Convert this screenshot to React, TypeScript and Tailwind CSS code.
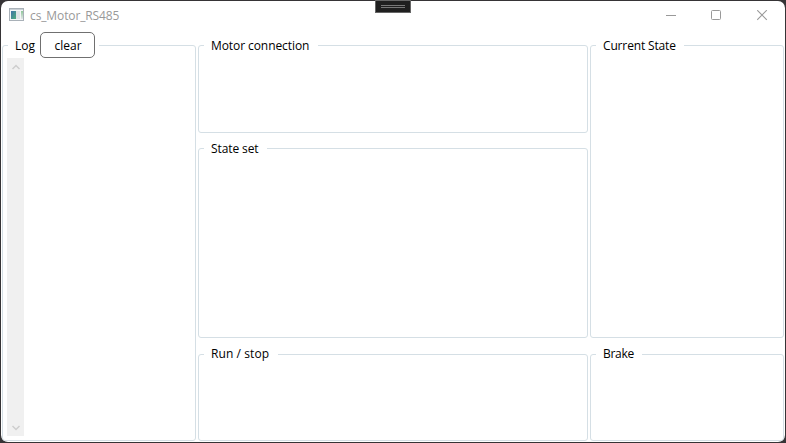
import type { ReactNode } from "react";

type GroupBoxProps = {
  legend: ReactNode;
  legendClass: string;
  className: string;
  children?: ReactNode;
};

function GroupBox({ legend, legendClass, className, children }: GroupBoxProps) {
  return (
    <section className={`rounded-[3px] border border-[#d5dfe5] ${className}`}>
      <div className={`-mt-[11px] mb-px ml-[5px] flex h-5 bg-white pl-[7px] whitespace-nowrap ${legendClass}`}>
        {legend}
      </div>
      {children}
    </section>
  );
}

function AppIcon() {
  return (
    <svg className="-mt-[2px]" width="16" height="14" viewBox="0 0 16 14" shapeRendering="crispEdges">
      <defs>
        <linearGradient id="screen" x1="0" y1="0" x2="1" y2="1">
          <stop offset="0" stopColor="#3f72a8" />
          <stop offset="1" stopColor="#4fae7c" />
        </linearGradient>
        <linearGradient id="panel" x1="0" y1="0" x2="0" y2="1">
          <stop offset="0" stopColor="#8fc79a" />
          <stop offset="1" stopColor="#e3e6e8" />
        </linearGradient>
      </defs>
      <rect x="0.5" y="0.5" width="14" height="12" fill="#f4f6f7" stroke="#a9b1b8" />
      <rect x="1" y="1" width="13" height="1" fill="#c9d0d5" />
      <rect x="2" y="3" width="5" height="8" fill="url(#screen)" />
      <rect x="7" y="3" width="4" height="8" fill="#dfe3e6" />
      <rect x="12" y="3" width="2" height="8" fill="url(#panel)" />
    </svg>
  );
}

function TitleBar() {
  return (
    <header className="flex h-[29px] items-center pl-2">
      <AppIcon />
      <h1 className="ml-[5px] w-24 pt-px text-[12px] leading-4 tracking-[-0.12px] whitespace-nowrap text-[#999999]">cs_Motor_RS485</h1>
      <div className="ml-auto flex text-[#999999]">
        <button aria-label="Minimize" className="flex w-[45px] justify-center">
          <svg width="11" height="11" shapeRendering="crispEdges"><path d="M0 5.5h10" stroke="currentColor" /></svg>
        </button>
        <button aria-label="Maximize" className="flex w-[45px] justify-center">
          <svg width="11" height="11" fill="none"><rect x="0.5" y="0.5" width="9" height="9" rx="1" stroke="currentColor" /></svg>
        </button>
        <button aria-label="Close" className="flex w-[46px] pl-[18px]">
          <svg width="11" height="11" fill="none"><path d="M.2 .2l9.6 9.6M9.8 .2l-9.6 9.6" stroke="currentColor" strokeWidth="1.1" /></svg>
        </button>
      </div>
    </header>
  );
}

function ScrollBar() {
  return (
    <div className="mt-[3px] ml-1 flex h-[378px] w-[17px] flex-col items-center justify-between bg-[#f0f0f0] pt-[6px] pb-[5px]">
      <svg width="8" height="6" fill="none"><path d="M.5 5L4 1.5 7.5 5" stroke="#cdcdcd" strokeWidth="1.5" /></svg>
      <svg width="8" height="6" fill="none"><path d="M.5 1L4 4.5 7.5 1" stroke="#cdcdcd" strokeWidth="1.5" /></svg>
    </div>
  );
}

export default function App() {
  return (
    <div className="relative h-[443px] w-[786px] overflow-hidden bg-[#363436] p-px font-['Open_Sans',sans-serif] text-[12px] leading-4 text-black">
      <div className="h-[441px] w-[784px] rounded-[7px] bg-white">
        <TitleBar />
        <main className="flex h-[411px] gap-[2px] pt-[15px] pl-px">
          <GroupBox
            className="h-[396px] w-[194px]"
            legendClass="w-[91px] items-center"
            legend={
              <>
                <span className="w-[25px] pt-[2px]">Log</span>
                <button className="-my-1 flex h-[26px] w-[55px] shrink-0 items-center justify-center rounded-[5px] border border-[#707070] bg-white pt-[2px] pl-px">clear</button>
              </>
            }
          >
            <ScrollBar />
          </GroupBox>
          <div className="flex w-[390px] flex-col">
            <GroupBox className="h-[88px]" legendClass="w-[114px] pt-[3px] tracking-[-0.08px]" legend="Motor connection" />
            <GroupBox className="mt-[15px] h-[190px]" legendClass="w-[63px] pt-[3px] tracking-[-0.1px]" legend="State set" />
            <GroupBox className="mt-4 h-[87px]" legendClass="w-[74px] pt-[2px] tracking-[0.08px]" legend="Run / stop" />
          </div>
          <div className="flex w-[194px] flex-col">
            <GroupBox className="h-[293px]" legendClass="w-[88px] pt-[3px] tracking-[-0.15px]" legend="Current State" />
            <GroupBox className="mt-4 h-[87px]" legendClass="w-[46px] pt-[2px] tracking-[-0.3px]" legend="Brake" />
          </div>
        </main>
      </div>
      <div className="absolute top-0 left-[375px] flex h-[13px] w-9 flex-col items-center gap-px border border-[#666666] bg-[#1f1f1f] pt-1">
        <span className="h-px w-6 bg-[#777777]" />
        <span className="h-px w-6 bg-[#777777]" />
      </div>
    </div>
  );
}
